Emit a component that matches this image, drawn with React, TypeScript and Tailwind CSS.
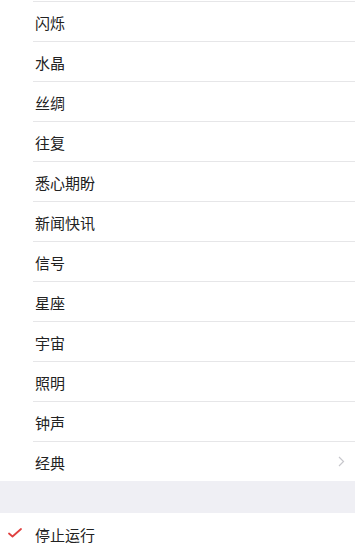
import React from 'react';

const tones = ['闪烁', '水晶', '丝绸', '往复', '悉心期盼', '新闻快讯', '信号', '星座', '宇宙', '照明', '钟声', '经典'];

const font = { fontFamily: '"Noto Sans CJK SC", "Noto Sans", sans-serif' };

export default function App() {
  return (
    <div className="w-[355px] h-[547px] overflow-hidden bg-white text-[#222]" style={font}>
      <div className="h-[1px]" />
      {tones.map((name, i) => (
        <div key={name} className="pl-[33px]">
          <div className="h-[40px] border-t border-[#e6e6e8] flex items-center pl-[2px] pr-[10px]">
            <span className="text-[15px] leading-none pt-[2px]">{name}</span>
            {i === tones.length - 1 && (
              <svg className="ml-auto" width="7" height="11" viewBox="0 0 7 11" fill="none">
                <path d="M1 1l4.5 4.5L1 10" stroke="#c7c7cc" strokeWidth="1.2" />
              </svg>
            )}
          </div>
        </div>
      ))}
      <div className="h-[32px] bg-[#efeff4]" />
      <div className="h-[40px] flex items-center">
        <div className="w-[35px] pl-[8px] flex items-center">
          <svg width="14" height="10" viewBox="0 0 14 10" fill="none">
            <path d="M1 5.5l3.5 3L13 1" stroke="#e0403f" strokeWidth="1.8" strokeLinecap="round" strokeLinejoin="round" />
          </svg>
        </div>
        <span className="text-[15px] leading-none pt-[2px]">停止运行</span>
      </div>
    </div>
  );
}
